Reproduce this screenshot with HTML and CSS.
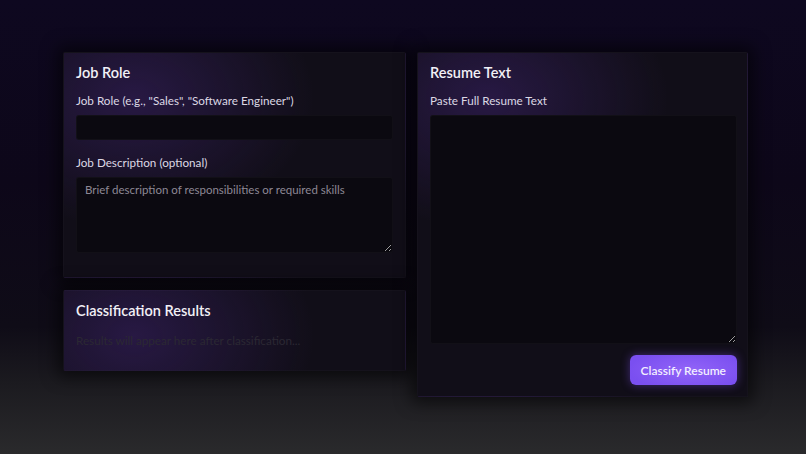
FILE: index.html
```html
<!DOCTYPE html>
<html lang="en">
<head>
<meta charset="utf-8">
<title>Resume Classifier</title>
<link rel="stylesheet" href="styles.css">
</head>
<body>
<main class="layout">
  <div class="column">
    <section class="card card-role">
      <h2 class="card-title">Job Role</h2>
      <div class="field">
        <label class="field-label">Job Role (e.g., "Sales", "Software Engineer")</label>
        <input class="input" type="text">
      </div>
      <div class="field">
        <label class="field-label">Job Description (optional)</label>
        <textarea class="textarea textarea-desc" placeholder="Brief description of responsibilities or required skills"></textarea>
      </div>
    </section>
    <section class="card card-results">
      <h2 class="card-title results-title">Classification Results</h2>
      <p class="results-empty">Results will appear here after classification...</p>
    </section>
  </div>
  <section class="card card-resume">
    <h2 class="card-title">Resume Text</h2>
    <div class="field field-last">
      <label class="field-label">Paste Full Resume Text</label>
      <textarea class="textarea textarea-resume"></textarea>
    </div>
    <div class="actions">
      <button class="btn-primary" type="button">Classify Resume</button>
    </div>
  </section>
</main>
</body>
</html>
```

FILE: styles.css
```css
* { box-sizing: border-box; }
html, body { margin: 0; padding: 0; }
body {
  width: 806px;
  height: 454px;
  overflow: hidden;
  font-family: "Lato", "Noto Sans", sans-serif;
  color: #ece9f2;
  background: linear-gradient(180deg, #0e0820 0%, #0d0719 40%, #0f0c17 72%, #1b1a1f 84%, #2a2a2c 100%);
}
.layout {
  display: grid;
  grid-template-columns: 343px 331px;
  gap: 11px;
  padding: 52px 0 0 63px;
  align-items: start;
}
.column {
  display: flex;
  flex-direction: column;
  gap: 12px;
}
.card {
  padding: 10px 12px 12px;
  background:
    radial-gradient(ellipse 180px 130px at 70px 45px, rgba(76, 42, 138, 0.38), rgba(76, 42, 138, 0) 100%),
    #110e18;
  border: 1px solid rgba(255, 255, 255, 0.02);
  box-shadow: 0 0 16px 6px rgba(0, 0, 0, 0.55);
  border-radius: 2px;
}
.card-resume { padding: 10px 10px 11px 12px; }
.card-title {
  margin: 0 0 10px;
  font-size: 14.5px;
  line-height: 19px;
  font-weight: 600;
  color: #f2f0f6;
}
.results-title { margin-bottom: 12px; }
.field { margin-bottom: 14px; }
.field:last-child { margin-bottom: 12px; }
.field-last { margin-bottom: 11px; }
.field-label {
  display: block;
  font-size: 11.7px;
  line-height: 16px;
  color: #dcd8e4;
  margin-bottom: 7px;
}
.input, .textarea {
  display: block;
  width: 100%;
  background: #0b0910;
  border: 1px solid rgba(255, 255, 255, 0.03);
  border-radius: 3px;
  color: #e0dde6;
  font-family: inherit;
  font-size: 11.5px;
  padding: 5px 8px;
  outline: none;
}
.input { height: 25px; }
.textarea { resize: vertical; }
.textarea::placeholder { color: #8d8895; }
.textarea-desc { height: 76px; }
.textarea-resume { height: 229px; }
.results-empty {
  margin: 0 0 10px;
  font-size: 11.7px;
  line-height: 16px;
  color: #2b2833;
}
.actions {
  display: flex;
  justify-content: flex-end;
}
.btn-primary {
  height: 30px;
  padding: 0 11px;
  border: none;
  border-radius: 6px;
  font-family: inherit;
  font-size: 12px;
  font-weight: 600;
  color: #f3efff;
  background: radial-gradient(ellipse 60px 20px at 55% 50%, #9264f8, #7a4ff0 100%);
  box-shadow: 0 0 10px rgba(124, 77, 240, 0.45);
}
```
